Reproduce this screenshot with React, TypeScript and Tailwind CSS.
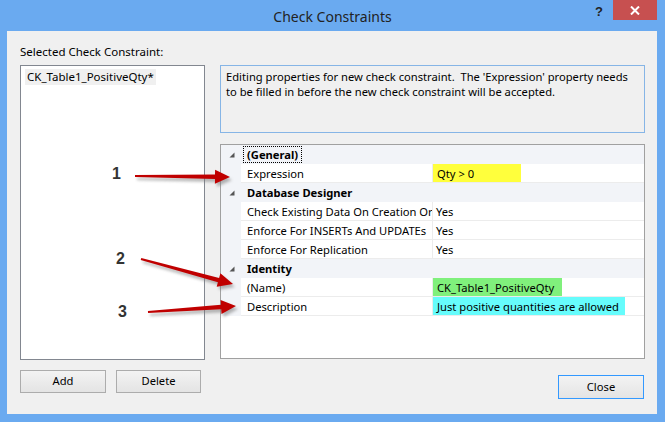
import React from "react";

const FONT = { fontFamily: '"Noto Sans", "Open Sans", sans-serif' };

function arrowPoints(x1: number, y1: number, x2: number, y2: number) {
  const dx = x2 - x1;
  const dy = y2 - y1;
  const len = Math.sqrt(dx * dx + dy * dy);
  const ux = dx / len;
  const uy = dy / len;
  const nx = -uy;
  const ny = ux;
  const headLen = 15;
  const headW = 7;
  const w0 = 1;
  const w1 = 2.2;
  const bx = x2 - ux * headLen;
  const by = y2 - uy * headLen;
  const pts: [number, number][] = [
    [x1 + nx * w0, y1 + ny * w0],
    [bx + nx * w1, by + ny * w1],
    [bx + nx * headW, by + ny * headW],
    [x2, y2],
    [bx - nx * headW, by - ny * headW],
    [bx - nx * w1, by - ny * w1],
    [x1 - nx * w0, y1 - ny * w0],
  ];
  return pts.map((p) => p.map((v) => v.toFixed(1)).join(",")).join(" ");
}

const arrows = [
  [135, 176, 230, 177],
  [141, 259, 233, 284],
  [148, 312, 236, 306],
];

function Tri() {
  return (
    <svg width="6" height="6" viewBox="0 0 6 6" className="block">
      <polygon points="5.5,0.5 5.5,5.5 0.5,5.5" fill="#555" />
    </svg>
  );
}

function Category({ label, focus }: { label: string; focus?: boolean }) {
  return (
    <div className="flex h-[19px] bg-[#f2f4f8]">
      <div className="w-[20px] flex items-center justify-center pl-[1px]">
        <Tri />
      </div>
      <div className="flex items-center pl-[2px]">
        <span
          className={
            "font-bold leading-[15px] px-[3px] " +
            (focus ? "border border-dotted border-black" : "border border-transparent")
          }
        >
          {label}
        </span>
      </div>
    </div>
  );
}

function Prop({
  label,
  value,
  hl,
  hlw,
}: {
  label: string;
  value: string;
  hl?: string;
  hlw?: string;
}) {
  return (
    <div className="flex h-[19px]">
      <div className="w-[20px] bg-[#f2f4f8]" />
      <div className="w-[192px] border-b border-r border-[#ececec] pl-[6px] pt-[1px] overflow-hidden whitespace-nowrap leading-[17px]">
        {label}
      </div>
      <div className="flex-1 border-b border-[#ececec] flex">
        {hl ? (
          <div className={"h-full whitespace-nowrap pl-[4px] pt-[1px] leading-[17px] " + hl + " " + (hlw || "")}>
            {value}
          </div>
        ) : (
          <div className="pl-[3px] pt-[1px] leading-[17px] whitespace-nowrap">{value}</div>
        )}
      </div>
    </div>
  );
}

function Btn({ label, w, def }: { label: string; w: string; def?: boolean }) {
  return (
    <div
      className={
        "flex items-center justify-center bg-gradient-to-b from-[#f3f3f3] to-[#e4e4e4] border " +
        (def ? "border-[#3399ff] h-[24px] " : "border-[#acacac] h-[23px] ") +
        w
      }
    >
      {label}
    </div>
  );
}

export default function App() {
  return (
    <div
      className="relative w-[665px] h-[422px] bg-[#6aaaf0] flex flex-col overflow-hidden text-[11.2px] text-black"
      style={FONT}
    >
      {/* Title bar */}
      <div className="grid grid-cols-[1fr_auto_1fr] h-[31px] shrink-0">
        <div />
        <div className="flex items-center text-[14px] text-[#222] pt-[1px]">Check Constraints</div>
        <div className="flex justify-end items-start">
          <div
            className="mt-[4px] mr-[10px] text-[13px] font-bold text-[#222] leading-[16px]"
            style={{ fontFamily: '"Liberation Sans", Arial, sans-serif' }}
          >
            ?
          </div>
          <div className="w-[44px] h-[20px] bg-[#c75050] mr-[8px] flex items-center justify-center">
            <svg width="10" height="9" viewBox="0 0 10 9">
              <path d="M1 0.5 L9 8.5 M9 0.5 L1 8.5" stroke="#fff" strokeWidth="2" />
            </svg>
          </div>
        </div>
      </div>

      {/* Client area */}
      <div className="flex-1 ml-[7px] mr-[8px] mb-[8px] bg-[#f0f0f0] flex pl-[13px] pt-[13px]">
        {/* Left column */}
        <div className="w-[185px] flex flex-col">
          <div className="h-[21px] leading-[16px] text-[11.5px]">Selected Check Constraint:</div>
          <div className="h-[295px] border border-[#828790] bg-white pt-[3px] pl-[4px]">
            <div className="inline-block bg-[#f0f0f0] px-[2px] leading-[16px] text-[11.5px]">CK_Table1_PositiveQty*</div>
          </div>
          <div className="flex gap-[10px] mt-[10px]">
            <Btn label="Add" w="w-[86px]" />
            <Btn label="Delete" w="w-[85px]" />
          </div>
        </div>

        {/* Right column */}
        <div className="w-[425px] ml-[15px] flex flex-col pt-[21px]">
          <div className="h-[68px] border border-[#86b5e6] bg-[#f0f0f0] px-[5px] pt-[3px] leading-[15px] whitespace-nowrap">
            Editing properties for new check constraint.&nbsp; The 'Expression' property needs
            <br />
            to be filled in before the new check constraint will be accepted.
          </div>
          <div className="h-[215px] mt-[11px] border border-[#a0a0a0] bg-white">
            <Category label="(General)" focus />
            <Prop label="Expression" value="Qty > 0" hl="bg-[#ffff3c]" hlw="w-[88px]" />
            <Category label="Database Designer" />
            <Prop label="Check Existing Data On Creation Or Re-Enabling" value="Yes" />
            <Prop label="Enforce For INSERTs And UPDATEs" value="Yes" />
            <Prop label="Enforce For Replication" value="Yes" />
            <Category label="Identity" />
            <Prop label="(Name)" value="CK_Table1_PositiveQty" hl="bg-[#80f07c]" hlw="w-[129px]" />
            <Prop
              label="Description"
              value="Just positive quantities are allowed"
              hl="bg-[#66fcfc]"
              hlw="w-[192px]"
            />
          </div>
          <div className="flex justify-end mt-[16px] pr-[1px]">
            <Btn label="Close" w="w-[86px]" def />
          </div>
        </div>
      </div>

      {/* Annotation overlay */}
      <svg
        className="absolute inset-0 pointer-events-none"
        width="665"
        height="422"
        viewBox="0 0 665 422"
      >
        <defs>
          <filter id="sh" x="-20%" y="-50%" width="140%" height="200%">
            <feGaussianBlur stdDeviation="1.6" />
          </filter>
        </defs>
        {arrows.map(([a, b, c, d], i) => (
          <g key={i}>
            <polygon points={arrowPoints(a + 2, b + 3, c + 2, d + 3)} fill="#777" opacity="0.55" filter="url(#sh)" />
            <polygon points={arrowPoints(a, b, c, d)} fill="#c00000" />
          </g>
        ))}
      </svg>
      <div
        className="absolute left-[112px] top-[165px] text-[16px] font-bold text-[#333] leading-[18px]"
        style={{ fontFamily: '"Liberation Sans", Arial, sans-serif' }}
      >
        1
      </div>
      <div
        className="absolute left-[116px] top-[250px] text-[16px] font-bold text-[#333] leading-[18px]"
        style={{ fontFamily: '"Liberation Sans", Arial, sans-serif' }}
      >
        2
      </div>
      <div
        className="absolute left-[118px] top-[303px] text-[16px] font-bold text-[#333] leading-[18px]"
        style={{ fontFamily: '"Liberation Sans", Arial, sans-serif' }}
      >
        3
      </div>
    </div>
  );
}
